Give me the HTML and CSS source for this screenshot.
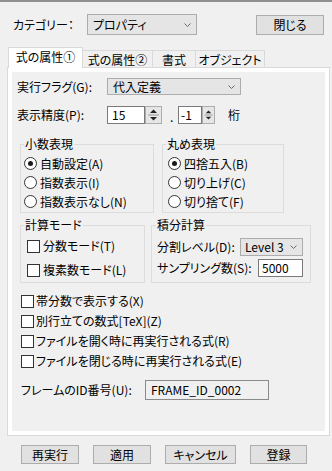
FILE: index.html
```html
<!DOCTYPE html>
<html lang="ja">
<head>
<meta charset="utf-8">
<link rel="stylesheet" href="styles.css">
</head>
<body>
<div class="dlg">
  <div class="toprow">
    <span class="cat-lbl">カテゴリー：</span>
    <div class="combo combo-cat"><span class="ctext">プロパティ</span><svg class="chev" width="7" height="4" viewBox="0 0 7 4"><polyline points="0.5,0.5 3.5,3.5 6.5,0.5" fill="none" stroke="#6a6a6a" stroke-width="1"/></svg></div>
    <div class="btn btn-close">閉じる</div>
  </div>

  <div class="tabs">
    <div class="tab sel">式の属性①</div>
    <div class="tab t2">式の属性②</div>
    <div class="tab t3">書式</div>
    <div class="tab t4">オブジェクト</div>
  </div>

  <div class="panel">
    <div class="inner">
      <div class="row row-a">
        <span class="lbl w90">実行フラグ(G):</span>
        <div class="combo combo-flag"><span class="ctext">代入定義</span><svg class="chev" width="7" height="4" viewBox="0 0 7 4"><polyline points="0.5,0.5 3.5,3.5 6.5,0.5" fill="none" stroke="#6a6a6a" stroke-width="1"/></svg></div>
      </div>

      <div class="row row-b">
        <span class="lbl w90">表示精度(P):</span>
        <div class="spin">
          <div class="field f1">15</div>
          <div class="sbtn b1"><svg width="15" height="16" viewBox="0 0 15 16"><polygon points="4,6 7.5,2.5 11,6" fill="#222"/><line x1="2" y1="8" x2="13" y2="8" stroke="#9a9a9a"/><polygon points="4,10 7.5,13.5 11,10" fill="#222"/></svg></div>
        </div>
        <span class="dot">.</span>
        <div class="spin">
          <div class="field f2">-1</div>
          <div class="sbtn b2"><svg width="12" height="16" viewBox="0 0 12 16"><polygon points="3,6 6,3 9,6" fill="#222"/><line x1="1.5" y1="8" x2="10.5" y2="8" stroke="#9a9a9a"/><polygon points="3,10 6,13 9,10" fill="#222"/></svg></div>
        </div>
        <span class="keta">桁</span>
      </div>

      <div class="grow grow-1">
        <div class="group g-dec">
          <span class="legend">小数表現</span>
          <div class="ropt"><span class="radio on"></span><span>自動設定(A)</span></div>
          <div class="ropt"><span class="radio"></span><span>指数表示(I)</span></div>
          <div class="ropt"><span class="radio"></span><span>指数表示なし(N)</span></div>
        </div>
        <div class="group g-round">
          <span class="legend">丸め表現</span>
          <div class="ropt"><span class="radio on"></span><span>四捨五入(B)</span></div>
          <div class="ropt"><span class="radio"></span><span>切り上げ(C)</span></div>
          <div class="ropt"><span class="radio"></span><span>切り捨て(F)</span></div>
        </div>
      </div>

      <div class="grow grow-2">
        <div class="group g-mode">
          <span class="legend">計算モード</span>
          <div class="copt"><span class="cbox"></span><span>分数モード(T)</span></div>
          <div class="copt"><span class="cbox"></span><span>複素数モード(L)</span></div>
        </div>
        <div class="group g-int">
          <span class="legend lg-int">積分計算</span>
          <div class="irow">
            <span>分割レベル(D):</span>
            <div class="combo combo-lvl"><span class="ctext">Level 3</span><svg class="chev" width="7" height="4" viewBox="0 0 7 4"><polyline points="0.5,0.5 3.5,3.5 6.5,0.5" fill="none" stroke="#6a6a6a" stroke-width="1"/></svg></div>
          </div>
          <div class="irow irow-2">
            <span>サンプリング数(S):</span>
            <div class="field f-samp">5000</div>
          </div>
        </div>
      </div>

      <div class="checks">
        <div class="chk"><span class="cbox"></span><span>帯分数で表示する(X)</span></div>
        <div class="chk"><span class="cbox"></span><span>別行立ての数式[TeX](Z)</span></div>
        <div class="chk"><span class="cbox"></span><span>ファイルを開く時に再実行される式(R)</span></div>
        <div class="chk"><span class="cbox"></span><span>ファイルを閉じる時に再実行される式(E)</span></div>
      </div>

      <div class="row row-frame">
        <span class="lbl w124">フレームのID番号(U):</span>
        <div class="field f-frame">FRAME_ID_0002</div>
      </div>
    </div>
  </div>

  <div class="btnrow">
    <div class="btn b-rerun">再実行</div>
    <div class="btn b-apply">適用</div>
    <div class="btn b-cancel">キャンセル</div>
    <div class="btn b-reg">登録</div>
  </div>
</div>
</body>
</html>
```

FILE: styles.css
```css
* { box-sizing: border-box; }
html, body {
  margin: 0;
  padding: 0;
  width: 332px;
  height: 471px;
  overflow: hidden;
  background: #f0f0f0;
}
body {
  font-family: "Noto Sans CJK JP", "Noto Sans", sans-serif;
  font-size: 12px;
  line-height: 14px;
  color: #000;
  font-feature-settings: "palt";
}
.dlg {
  width: 332px;
  height: 471px;
  border-top: 2px solid #8f8f8f;
  display: flex;
  flex-direction: column;
}

/* top row */
.toprow {
  margin-top: 12px;
  display: flex;
  align-items: flex-start;
  padding-left: 13px;
  padding-right: 8px;
  height: 21px;
}
.cat-lbl {
  width: 74px;
  line-height: 21px;
}
.combo {
  display: flex;
  align-items: center;
  justify-content: space-between;
  background: #e5e5e5;
  border: 1px solid #adadad;
  padding-left: 5px;
  padding-right: 5px;
}
.combo-cat { width: 110px; height: 21px; }
.chev { display: block; flex: none; }
.btn {
  display: flex;
  align-items: center;
  justify-content: center;
  background: #e1e1e1;
  border: 1px solid #adadad;
}
.btn-close {
  margin-left: auto;
  margin-top: 1px;
  width: 68px;
  height: 20px;
}

/* tabs */
.tabs {
  margin-top: 12px;
  margin-left: 8px;
  height: 21px;
  display: flex;
  align-items: flex-end;
  margin-bottom: -1px;
  position: relative;
  z-index: 1;
}
.tab {
  height: 17px;
  margin-bottom: 1px;
  border: 1px solid #d9d9d9;
  border-bottom: none;
  background: #f0f0f0;
  display: flex;
  align-items: center;
  justify-content: center;
  padding-top: 1px;
}
.tab.sel {
  height: 21px;
  margin-bottom: 0;
  width: 75px;
  background: #fff;
  position: relative;
  z-index: 2;
  padding-top: 0;
  padding-bottom: 2px;
}
.t2 { width: 71px; margin-left: -1px; }
.t3 { width: 44px; margin-left: -1px; }
.t4 { width: 70px; margin-left: -1px; }

/* panel */
.panel {
  margin-left: 7px;
  width: 323px;
  height: 369px;
  border: 1px solid #d9d9d9;
  background: #fff;
  padding: 4px;
}
.inner {
  height: 100%;
  background: #f0f0f0;
  display: flex;
  flex-direction: column;
}
.row {
  display: flex;
  align-items: center;
}
.lbl { flex: none; }
.w90 { width: 90px; }
.w124 { width: 124px; }
.row-a {
  margin-top: 6px;
  height: 17px;
  padding-left: 5px;
}
.combo-flag {
  width: 134px;
  height: 17px;
}
.ctext { white-space: nowrap; }

.row-b {
  margin-top: 11px;
  height: 18px;
  padding-left: 5px;
}
.spin { display: flex; height: 18px; }
.field {
  background: #fff;
  border: 1px solid #7a7a7a;
  display: flex;
  align-items: center;
  padding-left: 4px;
  white-space: nowrap;
}
.f1 { width: 38px; height: 18px; }
.f2 { width: 24px; height: 18px; padding-left: 2px; }
.sbtn {
  height: 18px;
  border: 1px solid #adadad;
  background: #e6e6e6;
  display: flex;
  align-items: center;
  justify-content: center;
}
.sbtn svg { display: block; }
.b1 { width: 17px; }
.b2 { width: 13px; }
.dot {
  margin-left: 8px;
  margin-right: 5px;
  width: 3px;
  align-self: flex-end;
  line-height: 14px;
}
.keta { margin-left: 13px; }

/* groups */
.grow { display: flex; }
.grow-1 { margin-top: 20px; height: 69px; }
.grow-2 { margin-top: 12px; height: 58px; }
.group {
  position: relative;
  border: 1px solid #dcdcdc;
  height: 100%;
}
.legend {
  position: absolute;
  top: -8px;
  left: 3px;
  padding: 0 1px;
  background: #f0f0f0;
  line-height: 14px;
  white-space: nowrap;
}
.lg-int { left: 4px; }
.g-dec { margin-left: 8px; width: 134px; padding: 9px 0 0 3px; }
.g-round { margin-left: 8px; width: 122px; padding: 9px 0 0 5px; }
.g-mode { margin-left: 8px; width: 125px; padding: 8px 0 0 6px; }
.g-int { margin-left: 6px; width: 160px; padding: 12px 7px 0 5px; }

.ropt {
  height: 19px;
  display: flex;
  align-items: center;
  white-space: nowrap;
}
.radio {
  width: 13px;
  height: 13px;
  border: 1px solid #333;
  border-radius: 50%;
  background: #fff;
  margin-right: 3px;
  flex: none;
  display: flex;
  align-items: center;
  justify-content: center;
}
.radio.on::after {
  content: "";
  width: 5px;
  height: 5px;
  border-radius: 50%;
  background: #1a1a1a;
}
.copt {
  height: 24px;
  display: flex;
  align-items: center;
  white-space: nowrap;
}
.cbox {
  width: 13px;
  height: 13px;
  border: 1px solid #333;
  background: #fff;
  flex: none;
  margin-right: 3px;
}
.irow {
  height: 18px;
  display: flex;
  align-items: center;
  justify-content: space-between;
  white-space: nowrap;
}
.irow-2 { margin-top: 3px; }
.combo-lvl { width: 63px; height: 18px; padding-left: 4px; }
.f-samp { width: 45px; height: 18px; padding-left: 3px; }

/* check list */
.checks {
  margin-top: 8px;
  padding-left: 9px;
  display: flex;
  flex-direction: column;
}
.chk {
  height: 20px;
  display: flex;
  align-items: center;
  white-space: nowrap;
}
.chk .cbox { margin-right: 2px; }

.row-frame {
  margin-top: 9px;
  height: 20px;
  padding-left: 9px;
}
.f-frame {
  width: 124px;
  height: 20px;
  background: #f0f0f0;
  border-color: #8a8a8a;
  align-items: flex-start;
  padding-top: 2px;
  padding-left: 5px;
}

/* bottom buttons */
.btnrow {
  margin-top: 9px;
  padding-left: 21px;
  display: flex;
  gap: 14px;
}
.btnrow .btn { height: 19px; }
.b-rerun { width: 58px; }
.b-apply { width: 58px; }
.b-cancel { width: 71px; }
.b-reg { width: 57px; }
```
